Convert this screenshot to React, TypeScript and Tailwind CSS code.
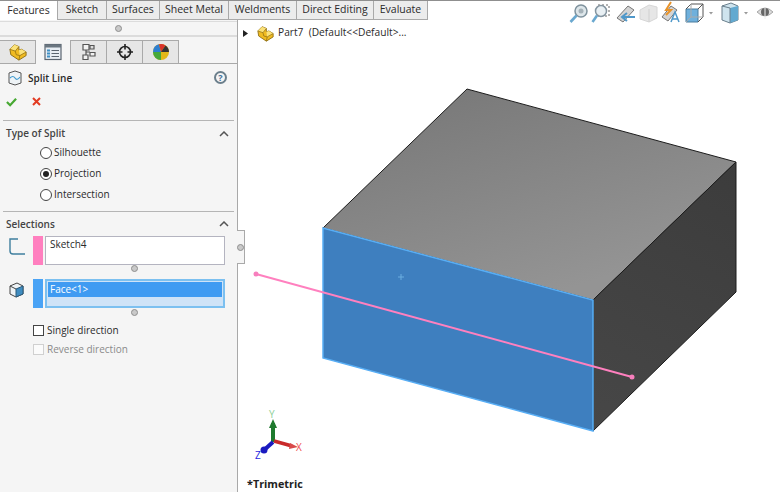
const tabs = [
  { label: "Features", width: "w-[57px]" },
  { label: "Sketch", width: "w-[50px]" },
  { label: "Surfaces", width: "w-[53px]" },
  { label: "Sheet Metal", width: "w-[69px]" },
  { label: "Weldments", width: "w-[68px]" },
  { label: "Direct Editing", width: "w-[77px]" },
  { label: "Evaluate", width: "w-[54px]" },
];

const PartIcon = ({ size = 20 }: { size?: number }) => (
  <svg width={size} height={size} viewBox="0 0 20 20">
    <path d="M1 7 L6 2 L11 4 L11 8 L14 7 L19 10 L19 14 L11 19 L2 13 Z" fill="#f0bb22" stroke="#8a6a10" strokeWidth="1" />
    <path d="M1 7 L6 2 L11 4 L7 9 Z" fill="#fbe27a" />
    <path d="M11 8 L14 7 L19 10 L12 14 Z" fill="#fbe27a" />
    <path d="M1 7 L7 9 L11 4 M7 9 L8 13 L12 14 L19 10 M12 14 L11 19" fill="none" stroke="#8a6a10" strokeWidth="0.8" />
  </svg>
);

const ListIcon = () => (
  <svg width="18" height="18" viewBox="0 0 18 18">
    <rect x="1" y="1.5" width="16" height="15" fill="#e8eef4" stroke="#5a6570" strokeWidth="1.2" />
    <rect x="1" y="1.5" width="16" height="3" fill="#6a7680" />
    <rect x="3" y="6.5" width="3" height="2" fill="#3f8fc4" />
    <rect x="3" y="9.5" width="3" height="2" fill="#3f8fc4" />
    <rect x="3" y="12.5" width="3" height="2" fill="#3f8fc4" />
    <path d="M7.5 7.5 H15 M7.5 10.5 H15 M7.5 13.5 H15" stroke="#5a6570" strokeWidth="1.2" />
  </svg>
);

const TreeIcon = () => (
  <svg width="18" height="18" viewBox="0 0 18 18" fill="#f2f2f2" stroke="#555" strokeWidth="1.2">
    <path d="M3 1.5 H9 V7 H3 Z M10 9.5 H15 V13 H10 Z M3 12 H8 V16.5 H3 Z" />
    <path d="M6 7 V12 M6 9 H10" fill="none" />
    <path d="M10 2.5 H14 V6 H10 Z" fill="#ddd" />
  </svg>
);

const TargetIcon = () => (
  <svg width="18" height="18" viewBox="0 0 18 18" fill="none" stroke="#222" strokeWidth="1.6">
    <circle cx="9" cy="9" r="5.5" />
    <path d="M9 1 V6.5 M9 11.5 V17 M1 9 H6.5 M11.5 9 H17" />
  </svg>
);

const ColorIcon = () => (
  <svg width="18" height="18" viewBox="0 0 18 18">
    <circle cx="9" cy="9" r="8" fill="#e2b818" />
    <path d="M9 9 L1 9 A8 8 0 0 1 7 1.2 Z" fill="#2e7fd0" />
    <path d="M9 9 L7 1.2 A8 8 0 0 1 13.5 2.4 Z" fill="#d8322a" />
    <path d="M9 9 L13.5 2.4 A8 8 0 0 1 17 9 Z" fill="#333" />
    <path d="M9 9 L1 9 A8 8 0 0 0 9 17 Z" fill="#47a83a" />
  </svg>
);

const Collapse = () => (
  <svg width="10" height="6" viewBox="0 0 10 6" fill="none" stroke="#555" strokeWidth="1.5">
    <path d="M1 5 L5 1 L9 5" />
  </svg>
);

const Grip = () => <div className="w-[7px] h-[7px] rounded-full bg-[#c9c9c9] border border-[#8f8f8f]" />;

const Radio = ({ label, on = false }: { label: string; on?: boolean }) => (
  <div className="flex items-center gap-[2px] h-[21px]">
    <div className="w-3 h-3 rounded-full border border-[#444] bg-white flex items-center justify-center">
      {on && <div className="w-[6px] h-[6px] rounded-full bg-[#222]" />}
    </div>
    <span>{label}</span>
  </div>
);

// toolbar drawn from x=560 of the window, one row below the top line
const Toolbar = () => (
  <svg width="220" height="24" viewBox="0 0 220 24" fill="none" className="shrink-0">
    {/* zoom to fit */}
    <circle cx="21" cy="10" r="6" fill="#dde6ea" stroke="#7f929d" strokeWidth="1.5" />
    <circle cx="21" cy="10" r="2.5" fill="#a6b2b9" />
    <path d="M16.5 14.5 L10.5 21" stroke="#6aa8cf" strokeWidth="2.6" />
    {/* zoom to area */}
    <rect x="38" y="4" width="11" height="11" stroke="#666" strokeDasharray="2 2" />
    <circle cx="41" cy="10" r="5.5" fill="#e9f0f4" stroke="#8595a0" strokeWidth="1.5" />
    <path d="M37 14.5 L32.5 21" stroke="#6aa8cf" strokeWidth="2.6" />
    {/* previous view */}
    <path d="M57 17 L68 5 L74 9 L63 21 Z" fill="#d4d4d4" stroke="#777" />
    <path d="M75 16 H63 M67 12 L62 16 L67 20" stroke="#4f98ca" strokeWidth="2" />
    {/* section view, greyed out */}
    <path d="M80 9 L89 4 L97 6 V17 L89 21 L80 18 Z" fill="#e6e6e6" stroke="#d6d6d6" />
    <path d="M89 8 V21" stroke="#d0d0d0" />
    {/* dynamic annotation */}
    <path d="M102 16 L111 5 L117 9 L108 20 Z" fill="#d4d4d4" stroke="#777" />
    <path d="M111 1 L106 9 L111 9 L106 14" stroke="#e8932a" strokeWidth="2" />
    <path d="M111 21 L115 11 L119 21 M112 18 H118" stroke="#4f98ca" strokeWidth="1.5" />
    {/* view orientation */}
    <path d="M126 8 H138 V21 H126 Z" fill="#6fb0dc" stroke="#4a7c9e" />
    <path d="M126 8 L131 3 H143 V16 L138 21 M138 8 L143 3" stroke="#555" />
    <path d="M131 3 V16 H143 M131 16 L126 21" stroke="#aaa" />
    <path d="M149 11 L153 11 L151 13.5 Z" fill="#999" />
    {/* display style */}
    <path d="M162 5 L171 2 L178 5 V19 L170 22 L162 19 Z" fill="#cfe4ee" stroke="#6a7f8c" />
    <path d="M170 7 L178 5 V19 L170 22 Z" fill="#62a9d0" />
    <path d="M162 5 L170 7 V22" stroke="#6a7f8c" />
    <path d="M184 11 L188 11 L186 13.5 Z" fill="#999" />
    {/* hide / show */}
    <path d="M197 11 Q205 3 213 11 Q205 19 197 11 Z" fill="#dcdcdc" stroke="#a8a8a8" />
    <circle cx="205" cy="11" r="4" fill="#666" />
    <path d="M205 7 V18" stroke="#eeeeee" />
  </svg>
);

export default function App() {
  return (
    <div className="w-[780px] h-[492px] bg-white font-['Open_Sans','Liberation_Sans',sans-serif] text-[10px] text-[#2a2a2a] flex flex-col overflow-hidden">
      <div className="h-[20px] flex shrink-0 border-t border-[#8f8f8f] bg-white">
        <div className="flex items-stretch">
          {tabs.map((t, i) => (
            <div
              key={t.label}
              className={
                t.width +
                (i === 0
                  ? " flex items-center justify-center bg-white text-[10.5px]"
                  : " flex items-center justify-center bg-[#ececec] border-r border-b border-[#a9a9a9] text-[10.5px]") +
                (i === 1 ? " border-l" : "")
              }
            >
              {t.label}
            </div>
          ))}
        </div>
        <div className="flex-1 flex justify-end relative z-10">
          <Toolbar />
        </div>
      </div>

      <div className="flex-1 flex min-h-0">
        <div className="w-[238px] shrink-0 bg-[#f5f5f5] border-r border-[#a9a9a9] flex flex-col">
          <div className="h-[16px] mt-[1px] border-t border-b-2 border-[#dcdcdc] flex items-center justify-center">
            <Grip />
          </div>

          <div className="h-[24px] mt-[3px] flex border-b border-[#a9a9a9]">
            <div className="w-[36px] h-[23px] flex items-center justify-center bg-[#e6e6e6] border-r border-t border-[#a9a9a9]">
              <PartIcon size={18} />
            </div>
            <div className="w-[35px] h-[24px] flex items-center justify-center bg-[#f5f5f5] border-r border-[#a9a9a9]">
              <ListIcon />
            </div>
            {[<TreeIcon key="a" />, <TargetIcon key="b" />, <ColorIcon key="c" />].map((icon, i) => (
              <div key={i} className="w-[36px] h-[23px] flex items-center justify-center bg-[#e6e6e6] border-r border-t border-[#a9a9a9]">
                {icon}
              </div>
            ))}
          </div>

          <div className="h-[28px] flex items-center pl-[8px] pr-[10px]">
            <svg width="14" height="16" viewBox="0 0 14 16" fill="none" className="mr-[6px]">
              <path d="M1 3 L7 1 L13 3 V13 L7 15 L1 13 Z" fill="#eef3f6" stroke="#555" />
              <path d="M2 8 Q5 5 7 8 T12 7" stroke="#3d9ad0" strokeWidth="1.2" />
            </svg>
            <span className="font-semibold flex-1">Split Line</span>
            <div className="w-[13px] h-[13px] mb-[2px] rounded-full border-2 border-[#6b7f8c] flex items-center justify-center text-[9px] font-bold text-[#3c6f99] leading-none">?</div>
          </div>

          <div className="h-[19px] flex items-center pl-[6px] gap-[15px]">
            <svg width="11" height="10" viewBox="0 0 12 10" fill="none">
              <path d="M1 5 L4.5 8.5 L11 1.5" stroke="#46a832" strokeWidth="2.4" />
            </svg>
            <svg width="9" height="9" viewBox="0 0 9 9" fill="none">
              <path d="M1 1 L8 8 M8 1 L1 8" stroke="#e23b22" strokeWidth="2" />
            </svg>
          </div>

          <div className="mx-[3px] mt-[9px] border-t border-[#b5b5b5]" />
          <div className="h-[25px] flex items-center justify-between pl-[6px] pr-[8px] font-semibold text-[#444]">
            <span>Type of Split</span>
            <Collapse />
          </div>
          <div className="pl-[40px] -mt-[4px]">
            <Radio label="Silhouette" />
            <Radio label="Projection" on />
            <Radio label="Intersection" />
          </div>

          <div className="mx-[3px] mt-[6px] border-t border-[#b5b5b5]" />
          <div className="h-[24px] flex items-center justify-between pl-[6px] pr-[8px] font-semibold text-[#444]">
            <span>Selections</span>
            <Collapse />
          </div>

          <div className="flex pl-[8px]">
            <div className="w-[25px] pt-[1px]">
              <svg width="18" height="18" viewBox="0 0 18 18" fill="none">
                <path d="M17 17 H5 Q2 17 2 14 V2 H10" stroke="#3f7f9e" strokeWidth="1.4" />
              </svg>
            </div>
            <div className="w-[10px] h-[29px] bg-[#ff7fbf]" />
            <div className="ml-[2px] w-[180px] h-[29px] bg-white border border-[#b4b4c0] px-[4px] text-[10px] leading-[15px]">Sketch4</div>
          </div>
          <div className="flex justify-center pl-[31px] h-[6px] items-center">
            <Grip />
          </div>

          <div className="flex pl-[8px] mt-[8px]">
            <div className="w-[25px] pt-[2px]">
              <svg width="16" height="18" viewBox="0 0 16 18" fill="none">
                <path d="M2 5 L9 2 L15 5 V13 L8 16 L2 13 Z" fill="#eef3f6" stroke="#444" />
                <path d="M8 8 L15 5 V13 L8 16 Z" fill="#3f8cc0" stroke="#2b5a7a" />
                <path d="M2 5 L8 8" stroke="#444" />
              </svg>
            </div>
            <div className="w-[10px] h-[29px] bg-[#4aa3f5]" />
            <div className="ml-[2px] w-[180px] h-[29px] border-2 border-[#7cc0f0] bg-[#cfe3f7]">
              <div className="h-[15px] mt-[1px] mx-[1px] bg-[#3f9bf2] text-white px-[2px] leading-[14px]">Face&lt;1&gt;</div>
            </div>
          </div>
          <div className="flex justify-center pl-[31px] h-[8px] items-center">
            <Grip />
          </div>

          <div className="flex items-center gap-[3px] pl-[33px] h-[18px] mt-[5px]">
            <div className="w-[11px] h-[11px] bg-white border border-[#444]" />
            <span>Single direction</span>
          </div>
          <div className="flex items-center gap-[3px] pl-[33px] h-[18px] mt-[1px] text-[#8a8a8a]">
            <div className="w-[11px] h-[11px] bg-[#fbfbfb] border border-[#d0d0d0]" />
            <span>Reverse direction</span>
          </div>
        </div>

        <div className="flex-1 relative bg-white">
          <div className="flex items-center h-[24px] pl-[5px] mt-[1px]">
            <svg width="5" height="7" viewBox="0 0 5 7" className="mr-[9px]">
              <path d="M0 0 L5 3.5 L0 7 Z" fill="#222" />
            </svg>
            <PartIcon size={17} />
            <span className="ml-[4px] text-[10.2px]">Part7&nbsp;&nbsp;(Default&lt;&lt;Default&gt;...</span>
          </div>

          {/* tab that sticks out of the panel for the splitter */}
          <div className="absolute left-[-1px] top-[210px] w-[8px] h-[34px] bg-[#f5f5f5] border-y border-r border-[#a9a9a9] flex items-center justify-center">
            <Grip />
          </div>

          <svg className="absolute left-[-238px] top-[-20px] pointer-events-none" width="780" height="492" viewBox="0 0 780 492" fill="none">
            <defs>
              <linearGradient id="top" x1="467" y1="89" x2="530" y2="300" gradientUnits="userSpaceOnUse">
                <stop offset="0" stopColor="#7a7a7a" />
                <stop offset="1" stopColor="#949494" />
              </linearGradient>
              <linearGradient id="side" x1="593" y1="431" x2="736" y2="162" gradientUnits="userSpaceOnUse">
                <stop offset="0" stopColor="#474747" />
                <stop offset="1" stopColor="#3c3c3c" />
              </linearGradient>
            </defs>
            <path d="M323 228 L467 89 L736 162 L593 300 Z" fill="url(#top)" stroke="#1c1c1c" />
            <path d="M593 300 L736 162 V292 L593 431 Z" fill="url(#side)" stroke="#1c1c1c" />
            <path d="M323 228 L593 300 V431 L323 358 Z" fill="#3e7fbf" stroke="#58aef5" strokeWidth="1.5" />
            <path d="M398 277 H404 M401 274 V280" stroke="#6aaee0" />
            <path d="M256 274 L632 377" stroke="#ff80bf" strokeWidth="2" />
            <circle cx="256" cy="274" r="2.5" fill="#f77fbd" />
            <circle cx="632" cy="377" r="2.5" fill="#f77fbd" />

            {/* triad */}
            <path d="M273 442 V423" stroke="#1f7a2e" strokeWidth="4" />
            <path d="M269 428 L273 419 L277 428 Z" fill="#1f7a2e" />
            <path d="M274 441 L292 446" stroke="#c92a2a" strokeWidth="3.5" />
            <path d="M290 443 L298 447 L289 449 Z" fill="#d94a4a" />
            <path d="M273 442 L263 451" stroke="#1a1ac0" strokeWidth="4" />
            <circle cx="264" cy="450" r="3.5" fill="#1a1ac0" />
          </svg>
          <span className="absolute left-[31px] top-[387px] text-[10px] text-[#8fd09a]">Y</span>
          <span className="absolute left-[58px] top-[420px] text-[10px] text-[#f05050]">X</span>
          <span className="absolute left-[17px] top-[428px] text-[10px] text-[#2a2ae0]">Z</span>

          <span className="absolute left-[9px] bottom-[0px] text-[10.8px] font-bold text-[#222]">*Trimetric</span>
        </div>
      </div>
    </div>
  );
}
